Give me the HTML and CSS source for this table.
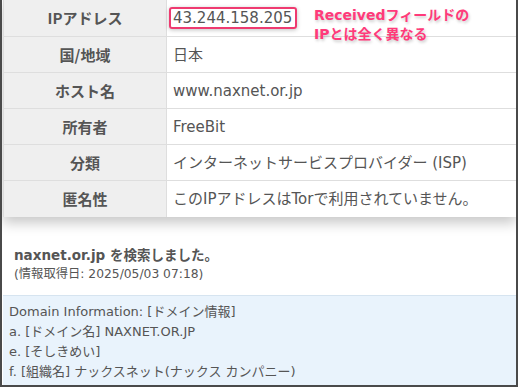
FILE: index.html
```html
<!DOCTYPE html>
<html lang="ja">
<head>
    <meta charset="UTF-8">
    <meta name="viewport" content="width=device-width, initial-scale=1.0">
    <title>IP情報</title>
    <link rel="stylesheet" href="styles.css">
</head>
<body>

    <div class="frame">
        <div class="table-wrap">
            <table class="info-table">
                <tr class="first">
                    <th>IPアドレス</th>
                    <td>
                        <span class="ip-box">43.244.158.205</span>
                        <span class="note">Receivedフィールドの<br>IPとは全く異なる</span>
                    </td>
                </tr>
                <tr>
                    <th>国/地域</th>
                    <td>日本</td>
                </tr>
                <tr>
                    <th>ホスト名</th>
                    <td>www.naxnet.or.jp</td>
                </tr>
                <tr>
                    <th>所有者</th>
                    <td>FreeBit</td>
                </tr>
                <tr>
                    <th>分類</th>
                    <td>インターネットサービスプロバイダー (ISP)</td>
                </tr>
                <tr>
                    <th>匿名性</th>
                    <td>このIPアドレスはTorで利用されていません。</td>
                </tr>
            </table>
        </div>

        <div class="search-result">
            <p class="search-title">naxnet.or.jp を検索しました。</p>
            <p class="search-date">(情報取得日: 2025/05/03 07:18)</p>
        </div>

        <div class="domain-box">
            Domain Information: [ドメイン情報]<br>
            a. [ドメイン名] NAXNET.OR.JP<br>
            e. [そしきめい]<br>
            f. [組織名] ナックスネット(ナックス カンパニー)
        </div>
    </div>

</body>
</html>
```

FILE: styles.css
```css
body {
    margin: 0;
    font-family: "DejaVu Sans", "Noto Sans CJK JP", sans-serif;
    color: #555;
    background-color: #ffffff;
}
.frame {
    width: 518px;
    height: 387px;
    box-sizing: border-box;
    border: 2px solid #4a4a4a;
    border-top: none;
    overflow: hidden;
    position: relative;
}
.table-wrap {
    margin-left: 1px;
    box-shadow: 0 6px 12px rgba(0, 0, 0, 0.22);
}
.info-table {
    width: 100%;
    border-collapse: separate;
    border-spacing: 0;
    border-left: 1px solid #dcdcdc;
    font-size: 15px;
}
.info-table th,
.info-table td {
    height: 35px;
    padding: 0;
    border-bottom: 1px solid #dedede;
    line-height: 20px;
}
.info-table tr.first th,
.info-table tr.first td {
    height: 36px;
}
.info-table tr:last-child th,
.info-table tr:last-child td {
    border-bottom: none;
    height: 36px;
}
.info-table th {
    width: 162px;
    background-color: #efefef;
    border-right: 1px solid #dedede;
    font-family: "Noto Sans CJK JP", "DejaVu Sans", sans-serif;
    font-weight: bold;
    text-align: center;
}
.info-table td {
    background-color: #ffffff;
    padding-left: 6px;
    text-align: left;
}
.ip-box {
    display: inline-block;
    padding: 0 3px 0 2px;
    margin-left: -4px;
    border: 2px solid #ee3a70;
    border-radius: 3px;
    line-height: 18px;
    box-shadow: 0 1px 4px rgba(0, 0, 0, 0.25);
}
/* callout next to the IP address */
.note {
    position: absolute;
    left: 312px;
    top: 6px;
    color: #ff3a7a;
    font-size: 14px;
    font-weight: bold;
    line-height: 19px;
    text-shadow: 1px 2px 3px rgba(0, 0, 0, 0.2);
}
.search-result {
    padding: 28px 11px 0 12px;
}
.search-result p {
    margin: 0;
}
.search-title {
    font-size: 13.5px;
    font-weight: bold;
    line-height: 20px;
}
.search-date {
    font-size: 12.3px;
    line-height: 19px;
}
.domain-box {
    margin: 11px 0 0 1px;
    padding: 6px 6px;
    background-color: #e9f3fc;
    border-top: 1px solid #d6e4f0;
    font-size: 13px;
    line-height: 20px;
}
```
